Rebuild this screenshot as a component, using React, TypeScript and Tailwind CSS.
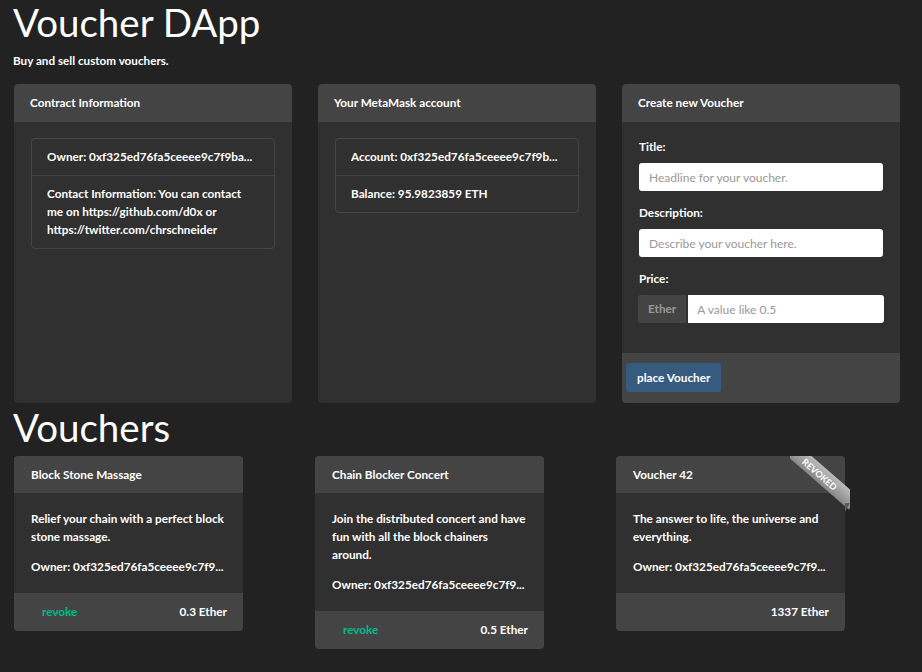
import React from 'react'

const OWNER = 'Owner: 0xf325ed76fa5ceeee9c7f9ba...'

interface Voucher {
    title: string
    description: string
    owner: string
    price: string
    revoked?: boolean
}

const vouchers: Voucher[] = [
    {
        title: 'Block Stone Massage',
        description: 'Relief your chain with a perfect block stone massage.',
        owner: 'Owner: 0xf325ed76fa5ceeee9c7f9...',
        price: '0.3 Ether'
    },
    {
        title: 'Chain Blocker Concert',
        description: 'Join the distributed concert and have fun with all the block chainers around.',
        owner: 'Owner: 0xf325ed76fa5ceeee9c7f9...',
        price: '0.5 Ether'
    },
    {
        title: 'Voucher 42',
        description: 'The answer to life, the universe and everything.',
        owner: 'Owner: 0xf325ed76fa5ceeee9c7f9...',
        price: '1337 Ether',
        revoked: true
    }
]

function Panel({ title, children, footer }: { title: string; children: React.ReactNode; footer?: React.ReactNode }) {
    return (
        <div className="flex flex-col rounded-[4px] overflow-hidden">
            <div className="h-[38px] shrink-0 flex items-center px-[16px] bg-[#444]">{title}</div>
            <div className="flex-1 bg-[#303030] px-[17px] pt-[16px]">{children}</div>
            {footer}
        </div>
    )
}

function ListGroup({ items }: { items: React.ReactNode[] }) {
    return (
        <div className="rounded-[4px] border border-[#444]">
            {items.map((item, i) => (
                <div key={i} className={`px-[15px] py-[9px] leading-[18px] ${i > 0 ? 'border-t border-[#444]' : ''}`}>
                    {item}
                </div>
            ))}
        </div>
    )
}

function Ribbon() {
    return (
        <>
            <div className="absolute top-0 right-[-5px] w-[60px] h-[60px] overflow-hidden pointer-events-none">
                <div className="absolute left-[-15px] top-[10px] w-[90px] h-[16px] rotate-[41deg] bg-gradient-to-b from-[#bcbcbc] to-[#888] flex items-center justify-center text-[9px] font-bold text-white leading-none">
                    REVOKED
                </div>
            </div>
            <div className="absolute right-[-5px] top-[47px] w-[5px] h-[9px] bg-[#5a5a5a] [clip-path:polygon(0_0,100%_0,0_100%)]" />
        </>
    )
}

function VoucherCard({ v }: { v: Voucher }) {
    return (
        <div className="relative w-[229px] rounded-[4px]">
            <div className="h-[37px] flex items-center px-[17px] bg-[#444] rounded-t-[4px]">{v.title}</div>
            <div className="bg-[#303030] p-[17px] leading-[18px]">
                <p>{v.description}</p>
                <p className="mt-[12px] whitespace-nowrap overflow-hidden">{v.owner}</p>
            </div>
            <div className={`h-[38px] flex items-center bg-[#444] rounded-b-[4px] pr-[16px] ${v.revoked ? 'justify-end' : 'justify-between pl-[28px]'}`}>
                {!v.revoked && <span className="text-[#00bc8c]">revoke</span>}
                <span>{v.price}</span>
            </div>
            {v.revoked && <Ribbon />}
        </div>
    )
}

export default function App() {
    return (
        <div className="min-h-screen bg-[#222] text-white text-[11.75px] font-bold px-[14px] pt-[1px] font-['Lato','Liberation_Sans',sans-serif]">
            <h1 className="text-[38.5px] leading-[43px] font-normal -ml-[1px]">Voucher DApp</h1>
            <p className="text-[11.7px] leading-[16px] mt-[8px] -ml-[1px]">Buy and sell custom vouchers.</p>

            <div className="mt-[16px] w-[886px] grid grid-cols-3 gap-[26px]">
                <Panel title="Contract Information">
                    <ListGroup
                        items={[
                            <span className="block whitespace-nowrap overflow-hidden">{OWNER}</span>,
                            'Contact Information: You can contact me on https://github.com/d0x or https://twitter.com/chrschneider'
                        ]}
                    />
                </Panel>
                <Panel title="Your MetaMask account">
                    <ListGroup
                        items={[
                            <span className="block whitespace-nowrap overflow-hidden">Account: 0xf325ed76fa5ceeee9c7f9b...</span>,
                            'Balance: 95.9823859 ETH'
                        ]}
                    />
                </Panel>
                <Panel
                    title="Create new Voucher"
                    footer={
                        <div className="h-[50px] shrink-0 bg-[#444] pl-[4px] pt-[10px]">
                            <button className="h-[29px] px-[11px] rounded-[3px] bg-[#375a7f] text-white font-bold">
                                place Voucher
                            </button>
                        </div>
                    }
                >
                    <div className="flex flex-col gap-[13px] pb-[30px]">
                        <div>
                            <label className="block leading-[18px] mb-[7px]">Title:</label>
                            <input
                                className="w-full h-[28px] rounded-[3px] bg-white px-[10px] text-[12px] font-normal text-[#333] placeholder:text-[#999] outline-none"
                                placeholder="Headline for your voucher."
                            />
                        </div>
                        <div>
                            <label className="block leading-[18px] mb-[7px]">Description:</label>
                            <input
                                className="w-full h-[28px] rounded-[3px] bg-white px-[10px] text-[12px] font-normal text-[#333] placeholder:text-[#999] outline-none"
                                placeholder="Describe your voucher here."
                            />
                        </div>
                        <div>
                            <label className="block leading-[18px] mb-[7px]">Price:</label>
                            <div className="flex gap-[2px] h-[28px] -mx-[1px]">
                                <span className="flex items-center px-[10px] bg-[#444] rounded-l-[3px] text-[#999]">Ether</span>
                                <input
                                    className="flex-1 min-w-0 h-full rounded-r-[3px] bg-white px-[9px] text-[12px] font-normal text-[#333] placeholder:text-[#999] outline-none"
                                    placeholder="A value like 0.5"
                                />
                            </div>
                        </div>
                    </div>
                </Panel>
            </div>

            <h1 className="mt-[3px] text-[38.5px] leading-[43px] font-normal -ml-[1px]">Vouchers</h1>

            <div className="mt-[7px] grid grid-cols-[301px_301px_301px] items-start pb-[20px]">
                {vouchers.map((v) => (
                    <VoucherCard key={v.title} v={v} />
                ))}
            </div>
        </div>
    )
}
